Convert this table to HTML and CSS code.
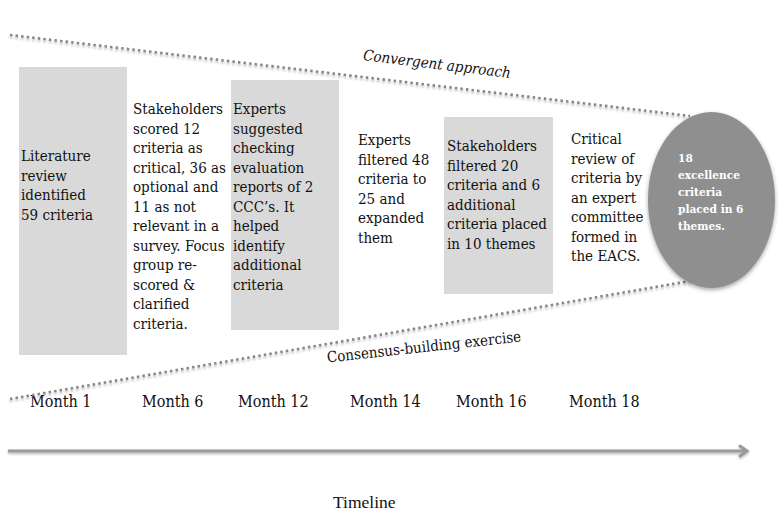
FILE: index.html
```html
<!DOCTYPE html>
<html lang="en">
<head>
<meta charset="utf-8">
<title>Criteria development timeline</title>
<link rel="stylesheet" href="styles.css">
</head>
<body>
<div class="diagram">
  <svg class="guides" width="779" height="522" viewBox="0 0 779 522" aria-hidden="true">
    <defs>
      <filter id="soft" x="-5%" y="-50%" width="110%" height="200%">
        <feDropShadow dx="0" dy="2" stdDeviation="1.2" flood-color="#000" flood-opacity="0.3"/>
      </filter>
    </defs>
    <line class="dots" x1="10" y1="35" x2="690" y2="116" filter="url(#soft)"/>
    <line class="dots" x1="10" y1="399" x2="690" y2="281" filter="url(#soft)"/>
  </svg>

  <div class="label converge">Convergent approach</div>
  <div class="label consensus">Consensus-building exercise</div>

  <div class="stages">
    <div class="stage s1 box">Literature<br>review<br>identified<br>59 criteria</div>
    <div class="stage s2">Stakeholders<br>scored 12<br>criteria as<br>critical, 36 as<br>optional and<br>11 as not<br>relevant in a<br>survey. Focus<br>group re-<br>scored &amp;<br>clarified<br>criteria.</div>
    <div class="stage s3 box">Experts<br>suggested<br>checking<br>evaluation<br>reports of 2<br>CCC’s. It<br>helped<br>identify<br>additional<br>criteria</div>
    <div class="stage s4">Experts<br>filtered 48<br>criteria to<br>25 and<br>expanded<br>them</div>
    <div class="stage s5 box">Stakeholders<br>filtered 20<br>criteria and 6<br>additional<br>criteria placed<br>in 10 themes</div>
    <div class="stage s6">Critical<br>review of<br>criteria by<br>an expert<br>committee<br>formed in<br>the EACS.</div>
    <div class="stage outcome">18<br>excellence<br>criteria<br>placed in 6<br>themes.</div>
  </div>

  <div class="months">
    <span class="month m1">Month 1</span>
    <span class="month m6">Month 6</span>
    <span class="month m12">Month 12</span>
    <span class="month m14">Month 14</span>
    <span class="month m16">Month 16</span>
    <span class="month m18">Month 18</span>
  </div>

  <div class="axis">
    <svg width="779" height="16" viewBox="0 0 779 16" aria-hidden="true">
      <defs>
        <filter id="axisShadow" x="-2%" y="-100%" width="104%" height="300%">
          <feDropShadow dx="0" dy="1.5" stdDeviation="1" flood-color="#000" flood-opacity="0.3"/>
        </filter>
      </defs>
      <g filter="url(#axisShadow)" stroke="#9a9a9a" fill="none" stroke-width="3">
        <line x1="8" y1="7" x2="746" y2="7"/>
        <polyline points="740,2 747,7 740,12" stroke-linejoin="miter" stroke-linecap="round"/>
      </g>
    </svg>
  </div>

  <div class="timeline">Timeline</div>
</div>
</body>
</html>
```

FILE: styles.css
```css
html, body {
  margin: 0;
  padding: 0;
  background: #ffffff;
}

body {
  width: 779px;
  height: 522px;
  overflow: hidden;
  color: #111111;
  font-family: "DejaVu Serif Condensed", "DejaVu Serif", serif;
  font-stretch: condensed;
}

.diagram {
  position: relative;
  width: 779px;
  height: 522px;
}

.guides {
  position: absolute;
  left: 0;
  top: 0;
}

.dots {
  stroke: #858585;
  stroke-width: 2.6;
  stroke-dasharray: 2.4 3.2;
}

.label {
  position: absolute;
  font-size: 15px;
  line-height: 20px;
  white-space: nowrap;
  z-index: 2;
}

.converge {
  left: 437px;
  top: 64px;
  font-style: italic;
  transform: translate(-50%, -50%) rotate(7deg);
}

.consensus {
  left: 424px;
  top: 347px;
  transform: translate(-50%, -50%) rotate(-6.2deg);
}

/* stage columns */
.stages {
  position: relative;
  z-index: 1;
  display: flex;
  align-items: flex-start;
  height: 355px;
}

.stage {
  font-size: 15px;
  line-height: 19.5px;
  white-space: nowrap;
  box-sizing: border-box;
}

.box {
  background: #d9d9d9;
  padding-left: 2px;
}

.s1 {
  margin-left: 19px;
  margin-top: 67px;
  width: 108px;
  height: 288px;
  padding-top: 80px;
}

.s2 {
  margin-left: 6px;
  margin-top: 100px;
  width: 98px;
}

.s3 {
  margin-top: 80px;
  width: 108px;
  height: 250px;
  padding-top: 20px;
}

.s4 {
  margin-left: 19px;
  margin-top: 131px;
  width: 86px;
}

.s5 {
  margin-top: 117px;
  width: 109px;
  height: 177px;
  padding-top: 20px;
  padding-left: 3px;
}

.s6 {
  margin-left: 18px;
  margin-top: 130px;
  width: 77px;
}

.outcome {
  margin-top: 112px;
  width: 127px;
  height: 176px;
  border-radius: 50%;
  background: #8f8f8f;
  box-shadow: 0 2px 4px rgba(0, 0, 0, 0.35);
  color: #ffffff;
  font-weight: bold;
  font-size: 11.8px;
  line-height: 17px;
  padding-top: 38px;
  padding-left: 30px;
}

/* month labels */
.months {
  display: flex;
  margin-top: 37px;
  font-size: 16px;
  line-height: 20px;
  white-space: nowrap;
}

.month {
  display: block;
}

.m1 { margin-left: 30px; width: 112px; }
.m6 { width: 96px; }
.m12 { width: 112px; }
.m14 { width: 106px; }
.m16 { width: 113px; }
.m18 { width: 80px; }

.axis {
  margin-top: 32px;
  height: 16px;
}

.axis svg {
  display: block;
}

.timeline {
  margin-top: 32px;
  padding-left: 333px;
  font-family: "Liberation Serif", "Times New Roman", serif;
  font-stretch: normal;
  font-size: 17.5px;
  line-height: 20px;
}
```
